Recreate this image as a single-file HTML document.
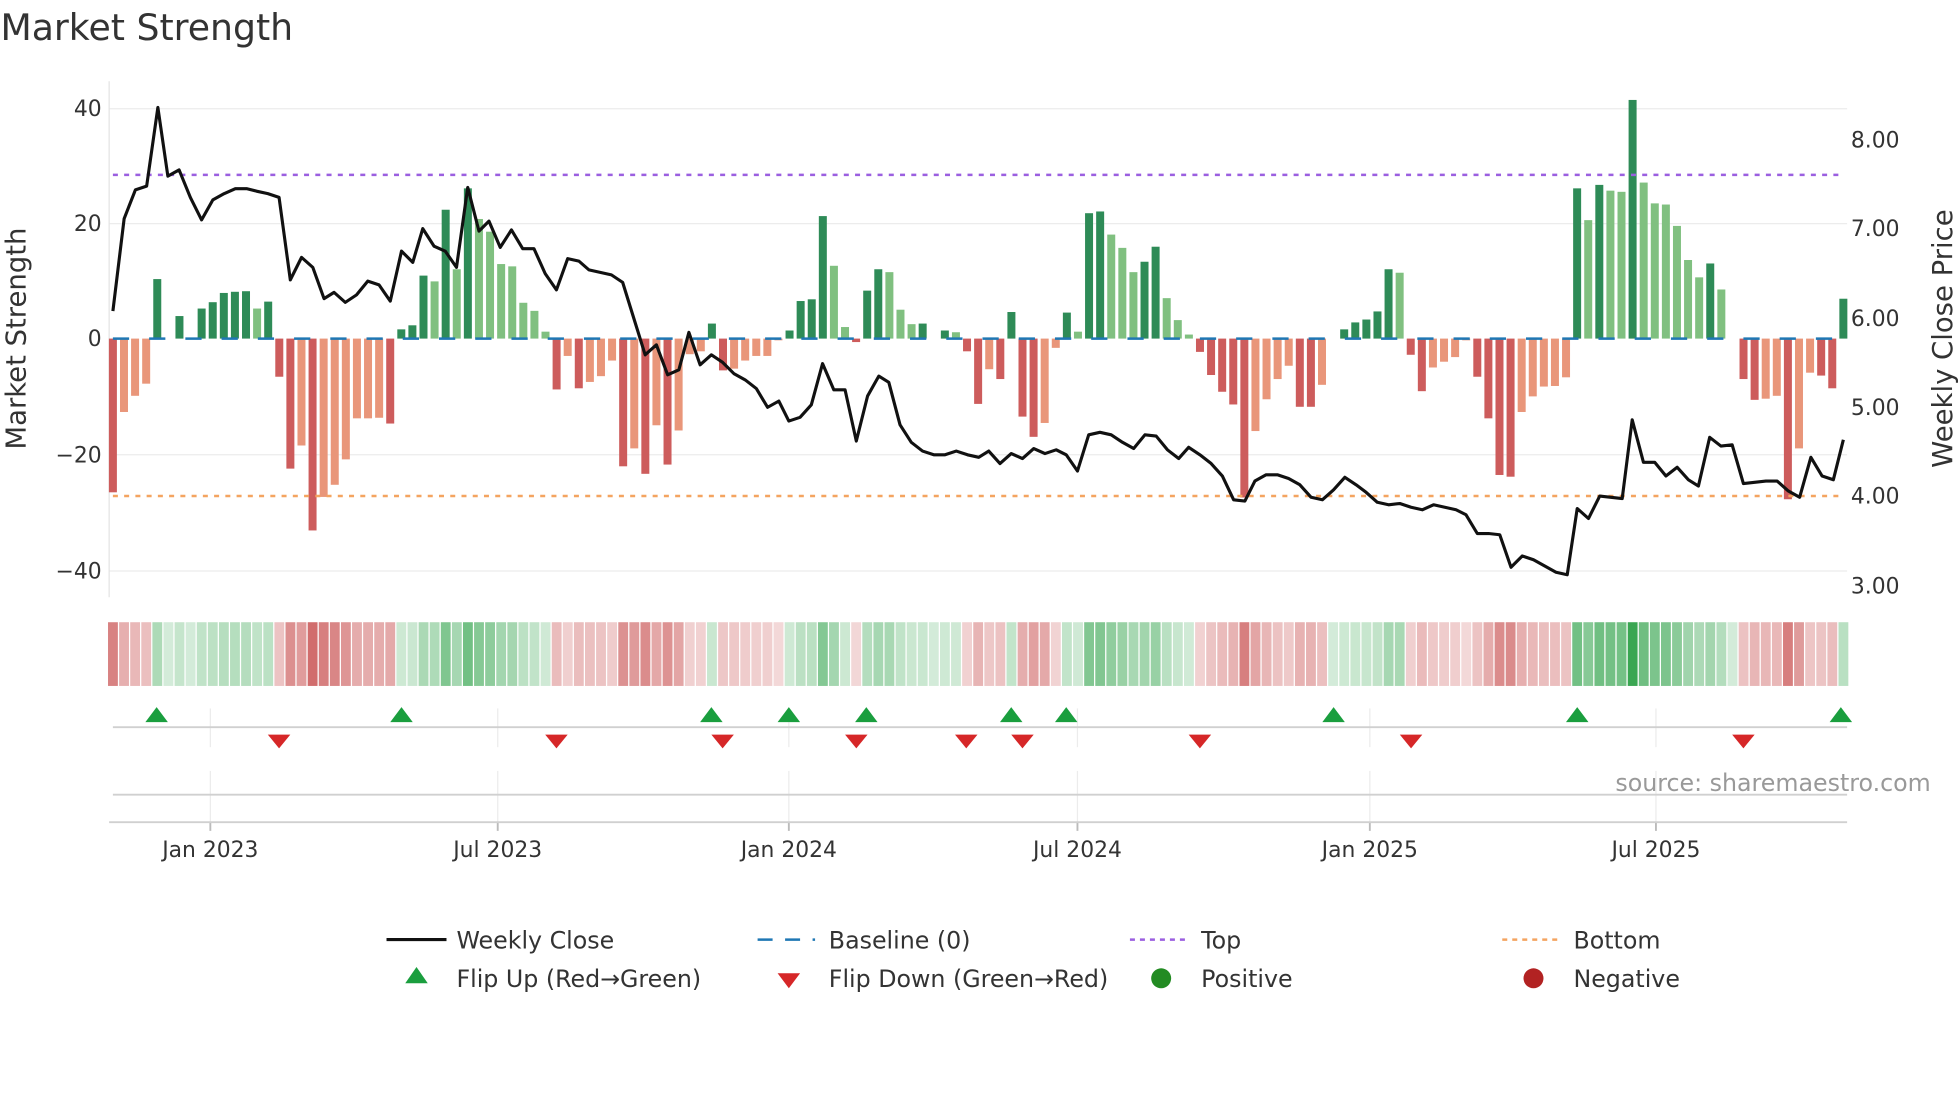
<!DOCTYPE html>
<html><head><meta charset="utf-8"><style>
html,body{margin:0;padding:0;background:#fff;width:1960px;height:1102px;overflow:hidden}
svg{display:block}
text{font-family:"DejaVu Sans","Liberation Sans",sans-serif;fill:#333}
</style></head><body>
<svg id="s" width="1960" height="1102" viewBox="0 0 1568 882" xmlns="http://www.w3.org/2000/svg">
<text x="0" y="32" font-size="29" fill="#333">Market Strength</text>
<g id="grid" stroke="#ececec" stroke-width="1">
<line x1="87" x2="1478" y1="87" y2="87"/><line x1="87" x2="1478" y1="179" y2="179"/>
<line x1="87" x2="1478" y1="364" y2="364"/><line x1="87" x2="1478" y1="457" y2="457"/>
</g>
<line x1="87" x2="87" y1="65" y2="478" stroke="#e4e4e4" stroke-width="1"/>
<g font-size="17.5" text-anchor="end">
<text x="81" y="93">40</text><text x="81" y="185">20</text><text x="81" y="277">0</text>
<text x="81" y="370">−20</text><text x="81" y="463">−40</text>
</g>
<g font-size="17.5">
<text x="1481" y="118">8.00</text><text x="1481" y="189">7.00</text><text x="1481" y="261">6.00</text>
<text x="1481" y="332">5.00</text><text x="1481" y="403">4.00</text><text x="1481" y="475">3.00</text>
</g>
<text transform="translate(20,271) rotate(-90)" text-anchor="middle" font-size="22">Market Strength</text>
<text transform="translate(1562,271) rotate(-90)" text-anchor="middle" font-size="22">Weekly Close Price</text>
<g id="bars"></g>
<line x1="90" x2="1476" y1="271" y2="271" stroke="#1f77b4" stroke-width="2" stroke-dasharray="13 16"/>
<line x1="90" x2="1476" y1="140" y2="140" stroke="#9b5fe0" stroke-width="2" stroke-dasharray="4 5"/>
<line x1="90" x2="1476" y1="397" y2="397" stroke="#f4a460" stroke-width="2" stroke-dasharray="4 5"/>
<polyline id="pl" fill="none" stroke="#111" stroke-width="2.5" stroke-linejoin="round"/>
<g id="heat"></g>
<g stroke="#ececec" stroke-width="1" id="vg"></g>
<line x1="90" x2="1478" y1="582" y2="582" stroke="#d0d0d0" stroke-width="1.5"/>
<line x1="90" x2="1478" y1="636" y2="636" stroke="#d0d0d0" stroke-width="1.5"/>
<line x1="87" x2="1478" y1="658" y2="658" stroke="#d0d0d0" stroke-width="1.5"/>
<g id="flips"></g>
<text x="1545" y="633" font-size="19" text-anchor="end" style="fill:#999">source: sharemaestro.com</text>
<g font-size="17.5" text-anchor="middle">
<text x="168" y="686">Jan 2023</text><text x="398" y="686">Jul 2023</text><text x="631" y="686">Jan 2024</text>
<text x="862" y="686">Jul 2024</text><text x="1096" y="686">Jan 2025</text><text x="1325" y="686">Jul 2025</text>
</g>
<g font-size="19">
<line x1="309" x2="357" y1="752" y2="752" stroke="#111" stroke-width="2.5"/>
<text x="365" y="759">Weekly Close</text>
<line x1="606" x2="652" y1="752" y2="752" stroke="#1f77b4" stroke-width="2" stroke-dasharray="12 10"/>
<text x="663" y="759">Baseline (0)</text>
<line x1="904" x2="950" y1="752" y2="752" stroke="#9b5fe0" stroke-width="2" stroke-dasharray="4 4"/>
<text x="961" y="759">Top</text>
<line x1="1202" x2="1248" y1="752" y2="752" stroke="#f4a460" stroke-width="2" stroke-dasharray="4 4"/>
<text x="1259" y="759">Bottom</text>
<polygon points="324,787 342,787 333,774" fill="#1a9e3e"/>
<text x="365" y="790">Flip Up (Red→Green)</text>
<polygon points="622,779 640,779 631,791" fill="#d62728"/>
<text x="663" y="790">Flip Down (Green→Red)</text>
<circle cx="929" cy="783" r="8" fill="#228b22"/>
<text x="961" y="790">Positive</text>
<circle cx="1227" cy="783" r="8" fill="#b22222"/>
<text x="1259" y="790">Negative</text>
</g>
</svg>
<script>
var V=[[-26.6,1],[-12.7,0],[-9.9,0],[-7.8,0],[10.3,1],[0,0],[3.9,1],[0,0],[5.2,1],[6.3,1],[7.9,1],[8.1,1],[8.2,1],[5.2,0],[6.4,1],[-6.6,1],[-22.5,1],[-18.5,0],[-33.2,1],[-27.4,0],[-25.3,0],[-20.9,0],[-13.8,0],[-13.8,0],[-13.7,0],[-14.7,1],[1.6,1],[2.3,1],[10.9,1],[9.9,0],[22.3,1],[12,0],[26,1],[20.7,0],[18.5,0],[12.9,0],[12.5,0],[6.2,0],[4.8,0],[1.2,0],[-8.8,1],[-3,0],[-8.6,1],[-7.5,0],[-6.5,0],[-3.8,0],[-22.1,1],[-19,0],[-23.4,1],[-15,0],[-21.8,1],[-15.9,0],[-2.7,0],[-2.2,0],[2.6,1],[-5.5,1],[-5.2,0],[-3.8,0],[-3,0],[-3,0],[-0.3,0],[1.4,1],[6.5,1],[6.8,1],[21.2,1],[12.6,0],[2,0],[-0.6,1],[8.3,1],[12,1],[11.5,0],[5,0],[2.5,0],[2.6,1],[0,0],[1.4,1],[1.1,0],[-2.2,1],[-11.3,1],[-5.3,0],[-7,1],[4.6,1],[-13.5,1],[-17,1],[-14.6,0],[-1.6,0],[4.5,1],[1.2,0],[21.7,1],[22,1],[18,0],[15.7,0],[11.5,0],[13.3,1],[15.9,1],[7,0],[3.2,0],[0.7,0],[-2.3,1],[-6.3,1],[-9.2,1],[-11.4,1],[-27.5,1],[-16,0],[-10.5,0],[-7,0],[-4.7,0],[-11.8,1],[-11.8,1],[-8,0],[0,0],[1.6,1],[2.8,1],[3.3,1],[4.7,1],[12,1],[11.4,0],[-2.8,1],[-9.1,1],[-5,0],[-4,0],[-3.2,0],[-0.3,0],[-6.6,1],[-13.8,1],[-23.6,1],[-23.9,1],[-12.7,0],[-10,0],[-8.3,0],[-8.2,0],[-6.7,0],[26,1],[20.5,0],[26.6,1],[25.6,0],[25.4,0],[41.3,1],[27,0],[23.4,0],[23.2,0],[19.5,0],[13.6,0],[10.6,0],[13,1],[8.5,0],[0,0],[-7,1],[-10.6,1],[-10.4,0],[-9.9,0],[-27.8,1],[-19,0],[-5.9,0],[-6.4,1],[-8.6,1],[6.9,1]];
var NS="http://www.w3.org/2000/svg";
function el(t,a,p){var e=document.createElementNS(NS,t);for(var k in a)e.setAttribute(k,a[k]);p.appendChild(e);return e;}
var bars=document.getElementById('bars'),heat=document.getElementById('heat');
var x0=90,dx=(1475-90)/156;
V.forEach(function(d,i){var v=d[0],x=x0+dx*i;var h=Math.abs(v)*4.625;
 var c=v>=0?(d[1]?'#2e8b57':'#80c080'):(d[1]?'#cd5c5c':'#e9967a');
 if(h>0.3)el('rect',{x:x-3.2,y:v>=0?271-h:271,width:6.4,height:h,fill:c},bars);
 var t=Math.min(Math.abs(v)/42,1),a=0.22+0.78*t;
 var base=v>=0?[55,165,80]:[200,80,80];
 var col='rgb('+base.map(function(b){return Math.round(255-(255-b)*a)}).join(',')+')';
 el('rect',{x:x-4.4+0.5,y:498,width:dx-1,height:51,fill:col},heat);
});
var P=[[90,249],[99,175],[108,152],[117,149],[126,86],[134,141],[143,136],[152,158],[161,176],[170,160],[179,155],[188,151],[197,151],[205,153],[214,155],[223,158],[232,224],[241,206],[250,214],[259,239],[267,234],[276,242],[285,236],[294,225],[303,228],[312,241],[321,201],[330,210],[338,183],[347,197],[356,201],[365,214],[374,150],[383,185],[391,177],[400,198],[409,184],[418,199],[427,199],[436,219],[445,232],[454,207],[463,209],[471,216],[480,218],[489,220],[498,226],[507,255],[516,284],[525,276],[534,300],[543,296],[551,266],[560,292],[569,284],[578,290],[587,299],[596,304],[605,311],[614,326],[623,321],[631,337],[640,334],[649,324],[658,291],[667,312],[676,312],[685,353],[694,317],[703,301],[711,306],[720,340],[729,354],[738,361],[747,364],[756,364],[765,361],[774,364],[783,366],[791,361],[800,371],[809,363],[818,367],[827,359],[836,363],[845,360],[853,364],[862,377],[871,348],[880,346],[889,348],[898,354],[907,359],[916,348],[925,349],[934,360],[943,367],[951,358],[960,364],[969,371],[978,381],[987,400],[996,401],[1004,385],[1013,380],[1022,380],[1031,383],[1040,388],[1049,398],[1058,400],[1067,392],[1076,382],[1085,388],[1093,394],[1102,402],[1111,404],[1120,403],[1129,406],[1138,408],[1147,404],[1156,406],[1165,408],[1173,412],[1182,427],[1191,427],[1200,428],[1209,454],[1218,445],[1227,448],[1236,453],[1245,458],[1254,460],[1262,407],[1271,415],[1280,397],[1289,398],[1298,399],[1306,336],[1315,370],[1324,370],[1333,381],[1342,374],[1351,384],[1359,389],[1368,350],[1377,357],[1386,356],[1395,387],[1404,386],[1413,385],[1422,385],[1431,393],[1440,398],[1449,366],[1458,381],[1467,384],[1475,352]];
document.getElementById('pl').setAttribute('points',P.map(function(p){return p.join(',')}).join(' '));
var vg=document.getElementById('vg');
[168,398,631,862,1096,1325].forEach(function(x){
 el('line',{x1:x,x2:x,y1:567,y2:598},vg);el('line',{x1:x,x2:x,y1:617,y2:658},vg);
 el('line',{x1:x,x2:x,y1:658,y2:665,stroke:'#bbb','stroke-width':1.5},vg);
});
var fl=document.getElementById('flips');
[125,321,569,631,693,809,853,1067,1262,1473].forEach(function(x){
 el('polygon',{points:(x-9)+',578 '+(x+9)+',578 '+x+',566',fill:'#1a9e3e'},fl);});
[223,445,578,685,773,818,960,1129,1395].forEach(function(x){
 el('polygon',{points:(x-9)+',588 '+(x+9)+',588 '+x+',599',fill:'#d62728'},fl);});
</script>
</body></html>
